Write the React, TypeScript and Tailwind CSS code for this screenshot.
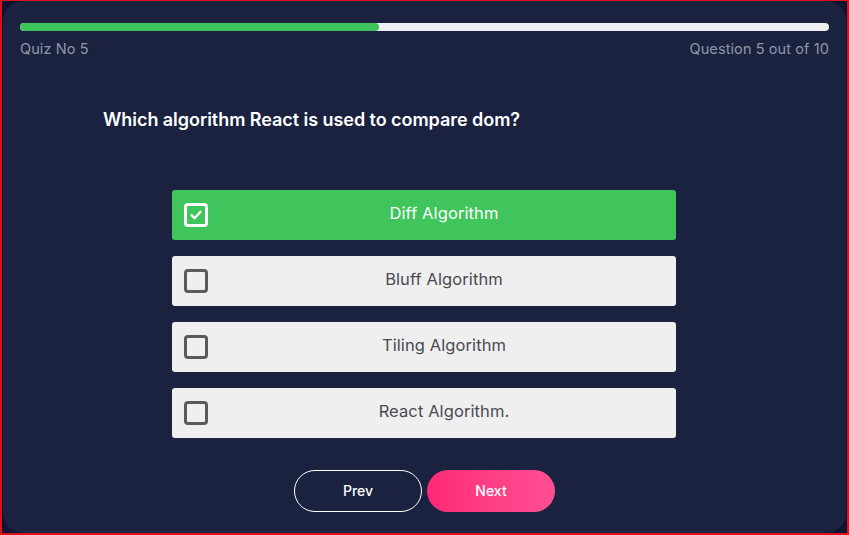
import React from "react";

const options = ["Diff Algorithm", "Bluff Algorithm", "Tiling Algorithm", "React Algorithm."];

export default function App() {
  const selected = 0;
  return (
    <div
      className="w-[849px] h-[535px] border-2 border-t border-[#e0101a] bg-[#0e1332] overflow-hidden"
      style={{ fontFamily: "Inter, 'Open Sans', sans-serif" }}
    >
      <div className="h-full mx-px rounded-[20px] bg-[#1a2240] flex flex-col px-[17px] pt-[22px]">
        <div className="h-2 w-full rounded-full bg-[#eceef2] overflow-hidden">
          <div className="h-full w-[44.4%] rounded-full bg-[#3fc35b]" />
        </div>
        <div className="flex justify-between mt-[8px] text-[14.5px] text-[#9097a8] tracking-[0.1px] leading-[20px]">
          <span>Quiz No 5</span>
          <span>Question 5 out of 10</span>
        </div>
        <h1 className="mt-[49px] ml-[83px] text-[18px] font-semibold text-white leading-[24px] tracking-[-0.05px]">
          Which algorithm React is used to compare dom?
        </h1>
        <div className="mt-[58px] flex flex-col gap-4 items-center -ml-px">
          {options.map((o, i) => {
            const active = i === selected;
            return (
              <div
                key={o}
                className={`w-[504px] h-[50px] rounded-[3px] flex items-center pl-3 ${
                  active ? "bg-[#3fc55b] text-white" : "bg-[#efefef] text-[#4a4a52]"
                }`}
              >
                <div
                  className={`w-6 h-6 rounded-[4px] border-[3px] flex items-center justify-center ${
                    active ? "border-white" : "border-[#5a5a5e]"
                  }`}
                >
                  {active && (
                    <svg width="14" height="14" viewBox="0 0 14 14" fill="none">
                      <path d="M2.5 7.2 L5.6 10.2 L11.5 3.8" stroke="white" strokeWidth="2.4" strokeLinecap="round" strokeLinejoin="round" />
                    </svg>
                  )}
                </div>
                <div className="flex-1 text-center text-[16.5px] tracking-[0.1px] pb-[3px] pl-[4px]">{o}</div>
              </div>
            );
          })}
        </div>
        <div className="mt-[32px] flex justify-center gap-[5px]">
          <button className="w-[128px] h-[42px] rounded-full border border-white text-white text-[14px] font-medium pb-[2px]">
            Prev
          </button>
          <button className="w-[128px] h-[42px] rounded-full bg-gradient-to-r from-[#ff2877] to-[#ff4e93] text-white text-[14px] font-medium pb-[2px]">
            Next
          </button>
        </div>
      </div>
    </div>
  );
}
